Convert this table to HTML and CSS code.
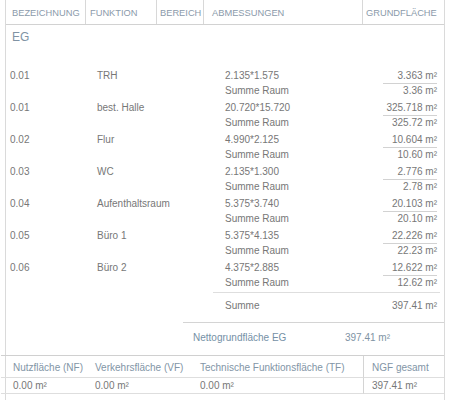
FILE: index.html
```html
<!DOCTYPE html>
<html lang="de">
<head>
<meta charset="utf-8">
<title>Flächenberechnung EG</title>
<link rel="stylesheet" href="styles.css">
</head>
<body>
<div class="sheet">
  <div class="head">
    <div class="hc h1">BEZEICHNUNG</div>
    <div class="hc h2">FUNKTION</div>
    <div class="hc h3">BEREICH</div>
    <div class="hc h4">ABMESSUNGEN</div>
    <div class="hc h5">GRUNDFLÄCHE</div>
  </div>
  <div class="floor">EG</div>
  <div class="rooms">
    <div class="room">
      <div class="num">0.01</div><div class="fn">TRH</div><div class="dim">2.135*1.575</div><div class="val top">3.363 m²</div>
      <div></div><div></div><div class="dim sub">Summe Raum</div><div class="val sub">3.36 m²</div>
    </div>
    <div class="room">
      <div class="num">0.01</div><div class="fn">best. Halle</div><div class="dim">20.720*15.720</div><div class="val top">325.718 m²</div>
      <div></div><div></div><div class="dim sub">Summe Raum</div><div class="val sub">325.72 m²</div>
    </div>
    <div class="room">
      <div class="num">0.02</div><div class="fn">Flur</div><div class="dim">4.990*2.125</div><div class="val top">10.604 m²</div>
      <div></div><div></div><div class="dim sub">Summe Raum</div><div class="val sub">10.60 m²</div>
    </div>
    <div class="room">
      <div class="num">0.03</div><div class="fn">WC</div><div class="dim">2.135*1.300</div><div class="val top">2.776 m²</div>
      <div></div><div></div><div class="dim sub">Summe Raum</div><div class="val sub">2.78 m²</div>
    </div>
    <div class="room">
      <div class="num">0.04</div><div class="fn">Aufenthaltsraum</div><div class="dim">5.375*3.740</div><div class="val top">20.103 m²</div>
      <div></div><div></div><div class="dim sub">Summe Raum</div><div class="val sub">20.10 m²</div>
    </div>
    <div class="room">
      <div class="num">0.05</div><div class="fn">Büro 1</div><div class="dim">5.375*4.135</div><div class="val top">22.226 m²</div>
      <div></div><div></div><div class="dim sub">Summe Raum</div><div class="val sub">22.23 m²</div>
    </div>
    <div class="room">
      <div class="num">0.06</div><div class="fn">Büro 2</div><div class="dim">4.375*2.885</div><div class="val top">12.622 m²</div>
      <div></div><div></div><div class="dim sub">Summe Raum</div><div class="val sub">12.62 m²</div>
    </div>
  </div>
  <div class="total">
    <span class="total-label">Summe</span>
    <span class="total-val">397.41 m²</span>
  </div>
  <div class="net">
    <span class="net-label">Nettogrundfläche EG</span>
    <span class="net-val">397.41 m²</span>
  </div>
  <div class="summary">
    <div class="sc s1 sh">Nutzfläche (NF)</div>
    <div class="sc s2 sh">Verkehrsfläche (VF)</div>
    <div class="sc s3 sh">Technische Funktionsfläche (TF)</div>
    <div class="sc s4 sh">NGF gesamt</div>
    <div class="sc s1 sv">0.00 m²</div>
    <div class="sc s2 sv">0.00 m²</div>
    <div class="sc s3 sv">0.00 m²</div>
    <div class="sc s4 sv">397.41 m²</div>
  </div>
</div>
</body>
</html>
```

FILE: styles.css
```css
html, body {
  margin: 0;
  padding: 0;
  background: #ffffff;
}

body {
  font-family: "Liberation Sans", Arial, sans-serif;
  font-size: 10px;
  color: #777777;
}

.sheet {
  margin-left: 5px;
  width: 438px;
  height: 400px;
  border-left: 1px solid #dadada;
  border-right: 1px solid #dadada;
}

/* header */
.head {
  display: grid;
  grid-template-columns: 80px 71px 47px 159px 81px;
  border-bottom: 1px solid #d2d2d2;
  height: 24px;
}

.hc {
  font-size: 9.3px;
  color: #8a9aaa;
  line-height: 21px;
  padding-top: 3px;
  white-space: nowrap;
  border-right: 1px solid #d8d8d8;
  overflow: hidden;
}

.h1 { padding-left: 6px; }
.h2 { padding-left: 4px; }
.h3 { padding-left: 3px; }
.h4 { padding-left: 8px; }
.h5 { padding-left: 3px; border-right: none; }

.floor {
  margin-top: 5px;
  padding-left: 6px;
  font-size: 12px;
  line-height: 14px;
  color: #8093a4;
  margin-bottom: 24px;
}

/* rooms */
.room {
  display: grid;
  grid-template-columns: 87px 128px 158px 54px;
  grid-template-rows: 16px 14px;
  padding-left: 4px;
  margin-bottom: 2px;
  line-height: 15px;
  white-space: nowrap;
}

.val {
  text-align: right;
}

.val.top {
  border-bottom: 1px solid #d2d2d2;
}

.sub {
  line-height: 14px;
}

/* total */
.total {
  display: flex;
  justify-content: space-between;
  margin-left: 207px;
  margin-right: 4px;
  border-top: 1px solid #dedede;
  padding: 6px 3px 0 12px;
  line-height: 14px;
  height: 23px;
}

/* net */
.net {
  display: flex;
  margin-left: 177px;
  border-top: 1px solid #d4d4d4;
  padding: 8px 0 0 10px;
  line-height: 14px;
  height: 24px;
}

.net-label {
  color: #7590a6;
  width: 152px;
}

.net-val {
  color: #8093a4;
}

/* summary */
.summary {
  margin-left: -5px;
  display: grid;
  grid-template-columns: 88px 105px 170px 80px;
  border-top: 1px solid #d0d0d0;
}

.sc {
  padding-left: 6px;
  white-space: nowrap;
}

.sh {
  color: #8295a6;
  line-height: 18px;
  padding-top: 3px;
  border-bottom: 1px solid #dedede;
}

.sv {
  line-height: 15px;
  border-bottom: 1px solid #dedede;
}

.s1 { padding-left: 12px; }
.s2 { padding-left: 6px; }
.s3 { padding-left: 6px; border-right: 1px solid #d4d4d4; }
.s4 { padding-left: 8px; }
```
